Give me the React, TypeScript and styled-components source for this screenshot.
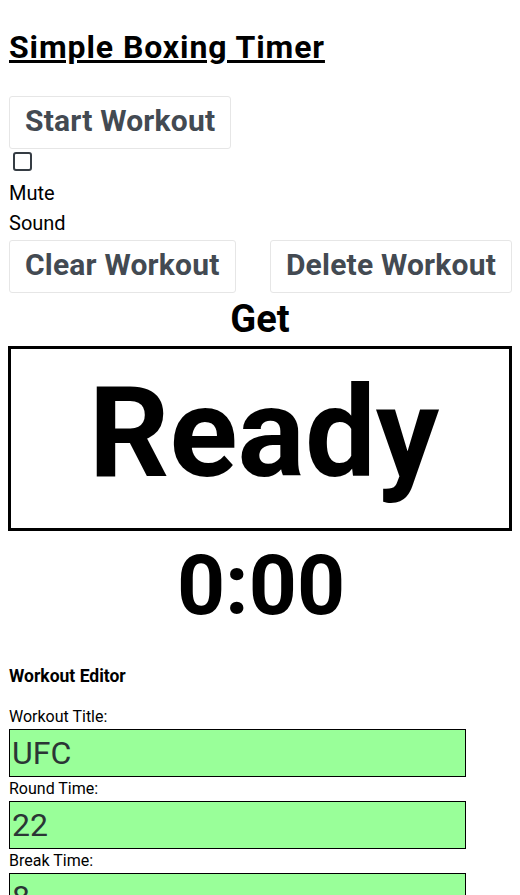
import React from "react";
import styled, { createGlobalStyle } from "styled-components";

const GlobalStyle = createGlobalStyle`
  body {
    margin: 8px;
    font-family: Roboto, "Liberation Sans", sans-serif;
    color: #000;
    background: #fff;
  }
`;

const Page = styled.div`
  display: flex;
  flex-direction: column;
`;

const Title = styled.h1`
  margin: 20px 0 30px 1px;
  font-size: 32px;
  font-weight: 700;
  letter-spacing: 0.9px;
  line-height: normal;
  text-decoration: underline;
`;

const ActionButton = styled.button`
  font-family: Roboto, "Liberation Sans", sans-serif;
  font-size: 30px;
  font-weight: 700;
  letter-spacing: 0.2px;
  line-height: normal;
  color: #434a52;
  background: #fff;
  border: 1px solid #e6e6e6;
  border-radius: 3px;
  padding: 6px 15px 10px;
  margin: 0;
  cursor: pointer;
`;

const StartRow = styled.div`
  display: flex;
  padding-left: 1px;
`;

const MuteBlock = styled.div`
  display: flex;
  flex-direction: column;
  align-items: flex-start;
`;

const Check = styled.input`
  appearance: none;
  width: 19px;
  height: 19px;
  margin: 3px 0 0 5px;
  border: 2px solid #353c43;
  border-radius: 3px;
  background: #fff;
  box-sizing: border-box;
`;

const MuteLabel = styled.label`
  width: 60px;
  margin: 7px 0 0 1px;
  font-size: 20px;
  line-height: 30px;
`;

const ButtonRow = styled.div`
  display: flex;
  justify-content: space-between;
  padding-left: 1px;
  margin-top: 2px;
`;

const GetText = styled.div`
  text-align: center;
  font-size: 38px;
  font-weight: 700;
  line-height: 53px;
`;

const ReadyBox = styled.div`
  border: 3px solid #000;
  padding: 9px 0 20px 8px;
  text-align: center;
  font-size: 126px;
  font-weight: 700;
  line-height: 150px;
`;

const Clock = styled.div`
  margin-top: 6px;
  padding-left: 2px;
  text-align: center;
  font-size: 84px;
  font-weight: 700;
  line-height: 98px;
`;

const Editor = styled.section`
  display: flex;
  flex-direction: column;
  align-items: flex-start;
  margin-top: 32px;
`;

const EditorTitle = styled.h3`
  margin: 0 0 21px 1px;
  font-size: 17.5px;
  font-weight: 700;
  line-height: 19px;
`;

const FieldLabel = styled.label`
  margin: 0 0 3px 1px;
  font-size: 16px;
  line-height: 19px;
`;

const FieldInput = styled.input`
  box-sizing: border-box;
  width: 457px;
  height: 48px;
  margin: 0 0 2px 1px;
  padding: 0 2px;
  border: 1px solid #000;
  background: #99ff99;
  font-family: Roboto, "Liberation Sans", sans-serif;
  font-size: 32px;
  color: #2b3535;
  outline: none;
`;

const fields = [
  { label: "Workout Title:", value: "UFC" },
  { label: "Round Time:", value: "22" },
  { label: "Break Time:", value: "8" },
];

export default function App() {
  return (
    <>
      <GlobalStyle />
      <Page>
        <Title>Simple Boxing Timer</Title>
        <StartRow>
          <ActionButton>Start Workout</ActionButton>
        </StartRow>
        <MuteBlock>
          <Check type="checkbox" id="mute" />
          <MuteLabel htmlFor="mute">Mute Sound</MuteLabel>
        </MuteBlock>
        <ButtonRow>
          <ActionButton>Clear Workout</ActionButton>
          <ActionButton>Delete Workout</ActionButton>
        </ButtonRow>
        <GetText>Get</GetText>
        <ReadyBox>Ready</ReadyBox>
        <Clock>0:00</Clock>
        <Editor>
          <EditorTitle>Workout Editor</EditorTitle>
          {fields.map((f) => (
            <React.Fragment key={f.label}>
              <FieldLabel>{f.label}</FieldLabel>
              <FieldInput defaultValue={f.value} />
            </React.Fragment>
          ))}
        </Editor>
      </Page>
    </>
  );
}
